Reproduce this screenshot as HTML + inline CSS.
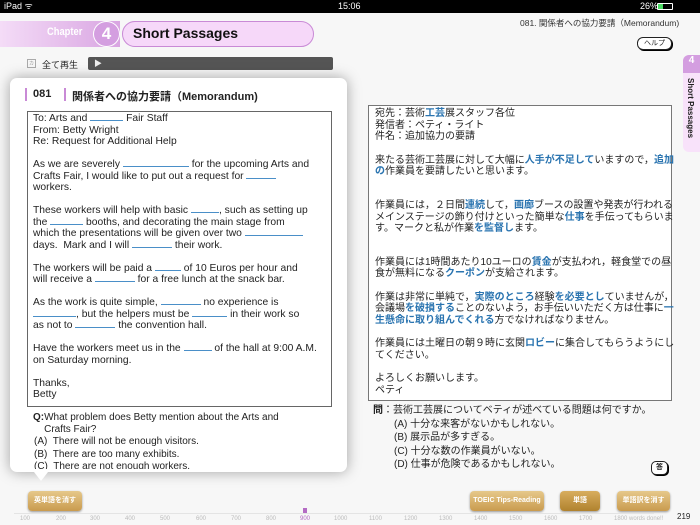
<!DOCTYPE html>
<html><head><meta charset="utf-8"><style>
*{margin:0;padding:0;box-sizing:border-box}
body{width:700px;height:525px;overflow:hidden;background:#f7f7f7;font-family:"Liberation Sans","Noto Sans CJK JP",sans-serif;position:relative;color:#222}
.a{position:absolute}
.bl{color:#2a74b0;font-weight:bold}
.u{display:inline-block;border-bottom:1px solid #4a8fc8;height:1px;vertical-align:0}
.jp{font-size:10px;white-space:nowrap}
.jp div{height:11.7px;line-height:11.7px}
.en{font-size:10.3px;white-space:nowrap}
.en div{height:11.5px;line-height:11.5px}
.btn{position:absolute;height:20px;border-radius:4px;background:linear-gradient(#e6c88a,#c99b4e);color:#fff;font-size:7px;font-weight:bold;text-align:center;line-height:20px;box-shadow:0 1px 2px rgba(0,0,0,.4)}
</style></head><body>
<div class="a" style="left:0;top:0;width:700px;height:13px;background:#000;color:#fff;font-size:9px;line-height:13px">
<span class="a" style="left:4px">iPad ᯤ</span>
<span class="a" style="left:338px">15:06</span>
<span class="a" style="left:640px">26%</span>
<span class="a" style="left:657px;top:3px;width:16px;height:7px;border:1px solid #fff;border-radius:1px"><span style="display:block;width:5px;height:5px;background:#4cd964"></span></span>
</div>
<div class="a" style="left:0;top:21px;width:120px;height:26px;background:linear-gradient(90deg,#f4dcf7,#d9a5e2);"></div>
<div class="a" style="left:47px;top:26px;color:#fff;font-weight:bold;font-size:11px;transform:scaleX(.85);transform-origin:left">Chapter</div>
<div class="a" style="left:93px;top:21px;width:27px;height:26px;border-radius:50%;background:#d49ee0;border:1px solid #fff;color:#fff;font-size:17px;font-weight:bold;text-align:center;line-height:24px">4</div>
<div class="a" style="left:122px;top:21px;width:192px;height:26px;border-radius:13px;background:#f6d8f9;border:1.5px solid #c98ad6;font-size:14px;font-weight:bold;line-height:23px;padding-left:10px;color:#111">Short Passages</div>
<div class="a" style="left:27px;top:59px;width:9px;height:9px;border:1px solid #aaa;font-size:5px;color:#999;text-align:center">カ</div>
<div class="a" style="left:42px;top:58px;font-size:9px">全て再生</div>
<div class="a" style="left:88px;top:57px;width:245px;height:13px;background:#555;border-radius:2px;color:#eee;font-size:8px;line-height:13px;padding-left:6px">▶</div>
<div class="a" style="left:520px;top:17px;font-size:8.5px;color:#333">081. 関係者への協力要請（Memorandum)</div>
<div class="a" style="left:637px;top:37px;width:35px;height:13px;border:1px solid #222;border-radius:6px;background:#fff;font-size:7px;text-align:center;line-height:11px;box-shadow:1px 1px 0 #000">ヘルプ</div>
<div class="a" style="left:683px;top:55px;width:17px;height:97px;background:#f8e2fa;border-radius:6px 0 0 6px"></div>
<div class="a" style="left:683px;top:55px;width:17px;height:18px;background:#d49ee0;border-radius:6px 0 0 0;color:#fff;font-size:10px;font-weight:bold;text-align:center">4</div>
<div class="a" style="left:686px;top:78px;writing-mode:vertical-rl;font-size:8px;font-weight:bold">Short Passages</div>
<div class="a" style="left:368px;top:105px;width:304px;height:296px;background:#fff;border:1px solid #777"></div>
<div class="a jp" style="left:375px;top:108px">
<div>宛先：芸術<span class="bl">工芸</span>展スタッフ各位</div><div>発信者：ペティ・ライト</div><div>件名：追加協力の要請</div><div></div>
<div>来たる芸術工芸展に対して大幅に<span class="bl">人手が不足して</span>いますので，<span class="bl">追加</span></div><div><span class="bl">の</span>作業員を要請したいと思います。</div><div></div><div style="height:10px"></div>
<div>作業員には，２日間<span class="bl">連続</span>して，<span class="bl">画廊</span>ブースの設置や発表が行われる</div><div>メインステージの飾り付けといった簡単な<span class="bl">仕事</span>を手伝ってもらいま</div><div>す。マークと私が作業<span class="bl">を監督し</span>ます。</div><div></div><div style="height:10px"></div>
<div>作業員には1時間あたり10ユーロの<span class="bl">賃金</span>が支払われ，軽食堂での昼</div><div>食が無料になる<span class="bl">クーポン</span>が支給されます。</div><div></div>
<div>作業は非常に単純で，<span class="bl">実際のところ</span>経験<span class="bl">を必要とし</span>ていませんが，</div><div>会議場<span class="bl">を破損する</span>ことのないよう，お手伝いいただく方は仕事に<span class="bl">一</span></div><div><span class="bl">生懸命に取り組んでくれる</span>方でなければなりません。</div><div></div>
<div>作業員には土曜日の朝９時に玄関<span class="bl">ロビー</span>に集合してもらうようにし</div><div>てください。</div><div></div>
<div>よろしくお願いします。</div><div>ペティ</div></div>
<div class="a" style="left:373px;top:404px;font-size:10px;line-height:13.5px;white-space:nowrap"><b>問</b>：芸術工芸展についてベティが述べている問題は何ですか。<br>
<div style="padding-left:21px">(A) 十分な来客がないかもしれない。<br>(B) 展示品が多すぎる。<br>(C) 十分な数の作業員がいない。<br>(D) 仕事が危険であるかもしれない。</div></div>
<div class="a" style="left:651px;top:461px;width:17px;height:14px;border:1px solid #222;border-radius:5px;background:#fff;font-size:7px;font-weight:bold;text-align:center;line-height:12px;box-shadow:1px 1px 0 #000">答</div>
<div class="a" style="left:10px;top:78px;width:337px;height:394px;background:#fff;border-radius:7px;box-shadow:0 0 14px rgba(0,0,0,.35)"></div>
<div class="a" style="left:34px;top:472px;width:0;height:0;border-left:7px solid transparent;border-right:7px solid transparent;border-top:9px solid #fff"></div>
<div class="a" style="left:25px;top:88px;width:2px;height:13px;background:#c98ad6"></div>
<div class="a" style="left:33px;top:88px;font-size:11px;font-weight:bold">081</div>
<div class="a" style="left:64px;top:88px;width:2px;height:13px;background:#c98ad6"></div>
<div class="a" style="left:72px;top:88px;font-size:11px;font-weight:bold">関係者への協力要請（Memorandum)</div>
<div class="a" style="left:27px;top:111px;width:305px;height:296px;border:1px solid #666"></div>
<div class="a en" style="left:33px;top:113px">
<div>To: Arts and <span class="u" style="width:33px"></span> Fair Staff</div><div>From: Betty Wright</div><div>Re: Request for Additional Help</div><div></div>
<div>As we are severely <span class="u" style="width:66px"></span> for the upcoming Arts and</div><div>Crafts Fair, I would like to put out a request for <span class="u" style="width:30px"></span></div><div>workers.</div><div></div>
<div>These workers will help with basic <span class="u" style="width:28px"></span>, such as setting up</div><div>the <span class="u" style="width:33px"></span> booths, and decorating the main stage from</div><div>which the presentations will be given over two <span class="u" style="width:58px"></span></div><div>days.&nbsp; Mark and I will <span class="u" style="width:40px"></span> their work.</div><div></div>
<div>The workers will be paid a <span class="u" style="width:26px"></span> of 10 Euros per hour and</div><div>will receive a <span class="u" style="width:40px"></span> for a free lunch at the snack bar.</div><div></div>
<div>As the work is quite simple, <span class="u" style="width:40px"></span> no experience is</div><div><span class="u" style="width:43px"></span>, but the helpers must be <span class="u" style="width:35px"></span> in their work so</div><div>as not to <span class="u" style="width:40px"></span> the convention hall.</div><div></div>
<div>Have the workers meet us in the <span class="u" style="width:28px"></span> of the hall at 9:00 A.M.</div><div>on Saturday morning.</div><div></div><div>Thanks,</div><div>Betty</div></div>
<div class="a" style="left:33px;top:412px;font-size:10px;line-height:12px;white-space:nowrap"><b>Q:</b>What problem does Betty mention about the Arts and<br>&nbsp;&nbsp;&nbsp;&nbsp;Crafts Fair?</div>
<div class="a" style="left:34px;top:436px;font-size:10px;line-height:12.5px;white-space:nowrap;height:33px;overflow:hidden">(A)&nbsp; There will not be enough visitors.<br>(B)&nbsp; There are too many exhibits.<br>(C)&nbsp; There are not enough workers.</div>
<div class="btn" style="left:28px;top:491px;width:54px">英単語を消す</div>
<div class="btn" style="left:470px;top:491px;width:74px">TOEIC Tips-Reading</div>
<div class="btn" style="left:560px;top:491px;width:40px;background:linear-gradient(#d8ad5e,#b0822e)">単語</div>
<div class="btn" style="left:617px;top:491px;width:53px">単語訳を消す</div>
<div class="a" style="left:14px;top:513px;width:640px;height:1px;background:#e4e4e4"></div>
<div class="a" style="left:0;top:516px;width:700px;font-size:6px;color:#bbb">
<span class="a" style="left:20px">100</span><span class="a" style="left:56px">200</span><span class="a" style="left:90px">300</span><span class="a" style="left:125px">400</span><span class="a" style="left:160px">500</span><span class="a" style="left:196px">600</span><span class="a" style="left:231px">700</span><span class="a" style="left:266px">800</span><span class="a" style="left:300px;color:#b46bc4">900</span><span class="a" style="left:334px">1000</span><span class="a" style="left:369px">1100</span><span class="a" style="left:404px">1200</span><span class="a" style="left:439px">1300</span><span class="a" style="left:474px">1400</span><span class="a" style="left:509px">1500</span><span class="a" style="left:544px">1600</span><span class="a" style="left:579px">1700</span><span class="a" style="left:614px">1800 words done!!</span></div>
<div class="a" style="left:303px;top:508px;width:4px;height:5px;background:#b46bc4"></div>
<div class="a" style="left:677px;top:512px;font-size:8px;color:#222">219</div>
</body></html>
